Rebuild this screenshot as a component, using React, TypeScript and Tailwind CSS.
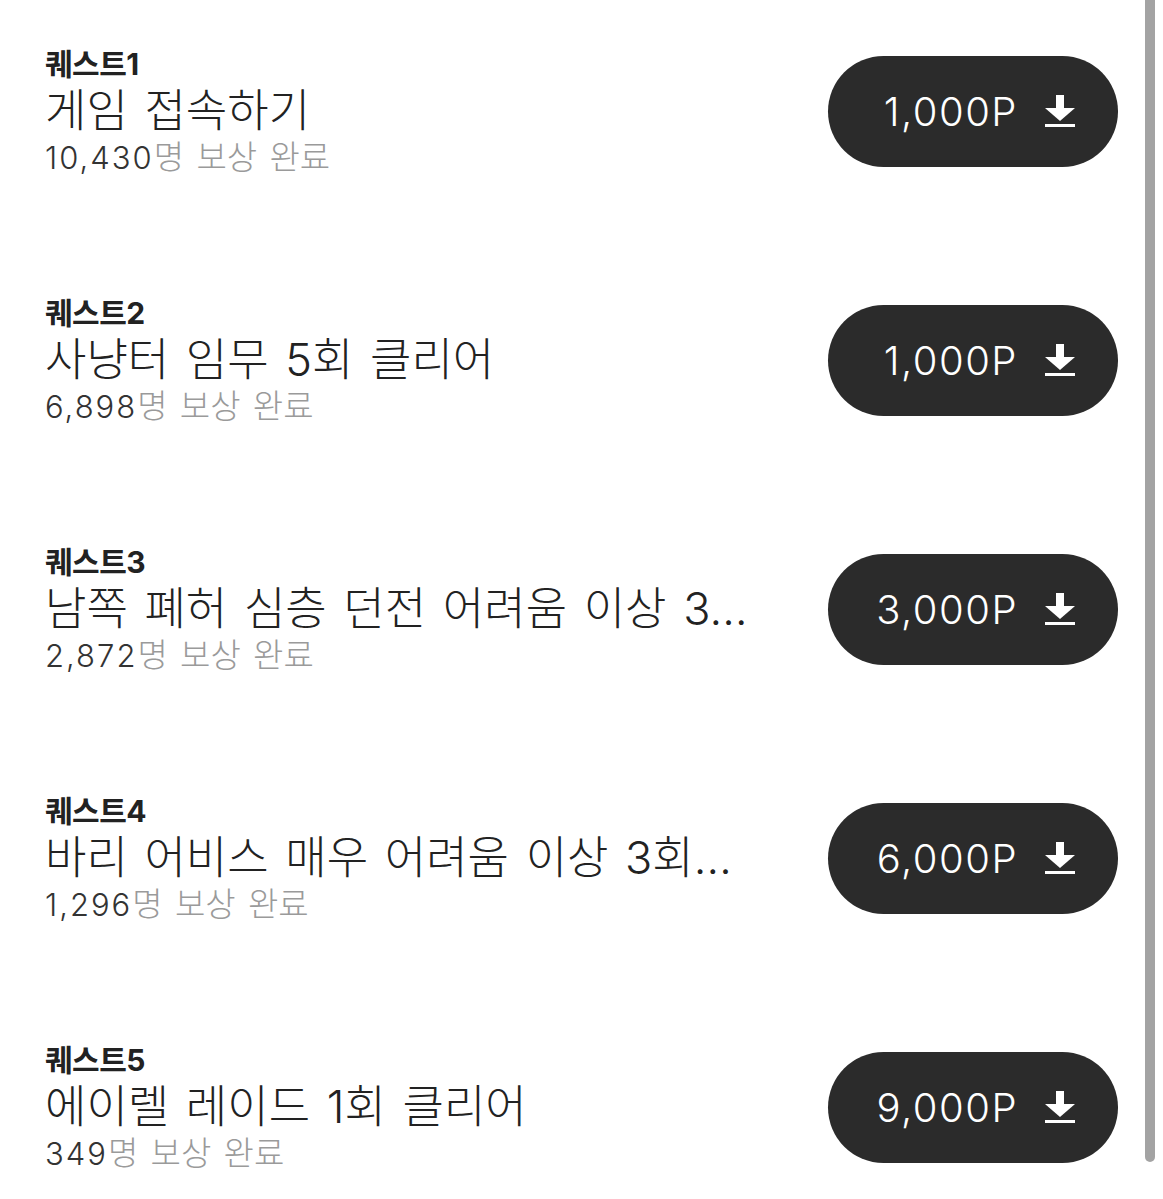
import React from "react";

const quests = [
  { n: 1, title: "게임 접속하기", count: "10,430", point: "1,000P" },
  { n: 2, title: "사냥터 임무 5회 클리어", count: "6,898", point: "1,000P" },
  { n: 3, title: "남쪽 폐허 심층 던전 어려움 이상 3…", count: "2,872", point: "3,000P" },
  { n: 4, title: "바리 어비스 매우 어려움 이상 3회…", count: "1,296", point: "6,000P" },
  { n: 5, title: "에이렐 레이드 1회 클리어", count: "349", point: "9,000P" },
];

function DownloadIcon() {
  return (
    <svg width="30" height="33" viewBox="0 0 30 33" fill="white">
      <rect x="11" y="0" width="8" height="14" />
      <polygon points="0,13 30,13 15,26" />
      <rect x="0" y="29" width="30" height="3" />
    </svg>
  );
}

export default function App() {
  return (
    <div
      className="relative w-[1163px] h-[1199px] bg-white overflow-hidden"
      style={{ fontFamily: "Inter, 'Noto Sans CJK KR', sans-serif" }}
    >
      <div className="flex flex-col gap-[138px] pt-[56px] pl-[45px] pr-[45px]">
        {quests.map((q) => (
          <div key={q.n} className="flex items-start justify-between h-[111px]">
            <div className="flex flex-col w-[710px] -mt-[8px]">
              <div className="text-[30px] leading-[32px] font-bold text-[#222222] tracking-[-0.5px]">
                퀘스트{q.n}
              </div>
              <div className="text-[45px] leading-[56px] font-light text-[#222222] whitespace-nowrap [word-spacing:4px] mt-[3px]">
                {q.title}
              </div>
              <div className="text-[33px] leading-[38px] whitespace-nowrap [word-spacing:3px] -mt-[1px]">
                <span className="text-[#333333] font-light text-[31px] tracking-[2px]">{q.count}</span>
                <span className="text-[#9a9a9a] font-light">명 보상 완료</span>
              </div>
            </div>
            <div className="flex items-center justify-end pr-[43px] gap-[27px] w-[290px] h-[111px] rounded-full bg-[#2b2b2b]">
              <span className="text-white text-[40px] font-light tracking-[1.5px]">{q.point}</span>
              <DownloadIcon />
            </div>
          </div>
        ))}
      </div>
      <div className="absolute left-[1145px] top-0 w-[10px] h-[1162px] rounded-b-full bg-[#a3a3a3]" />
    </div>
  );
}
